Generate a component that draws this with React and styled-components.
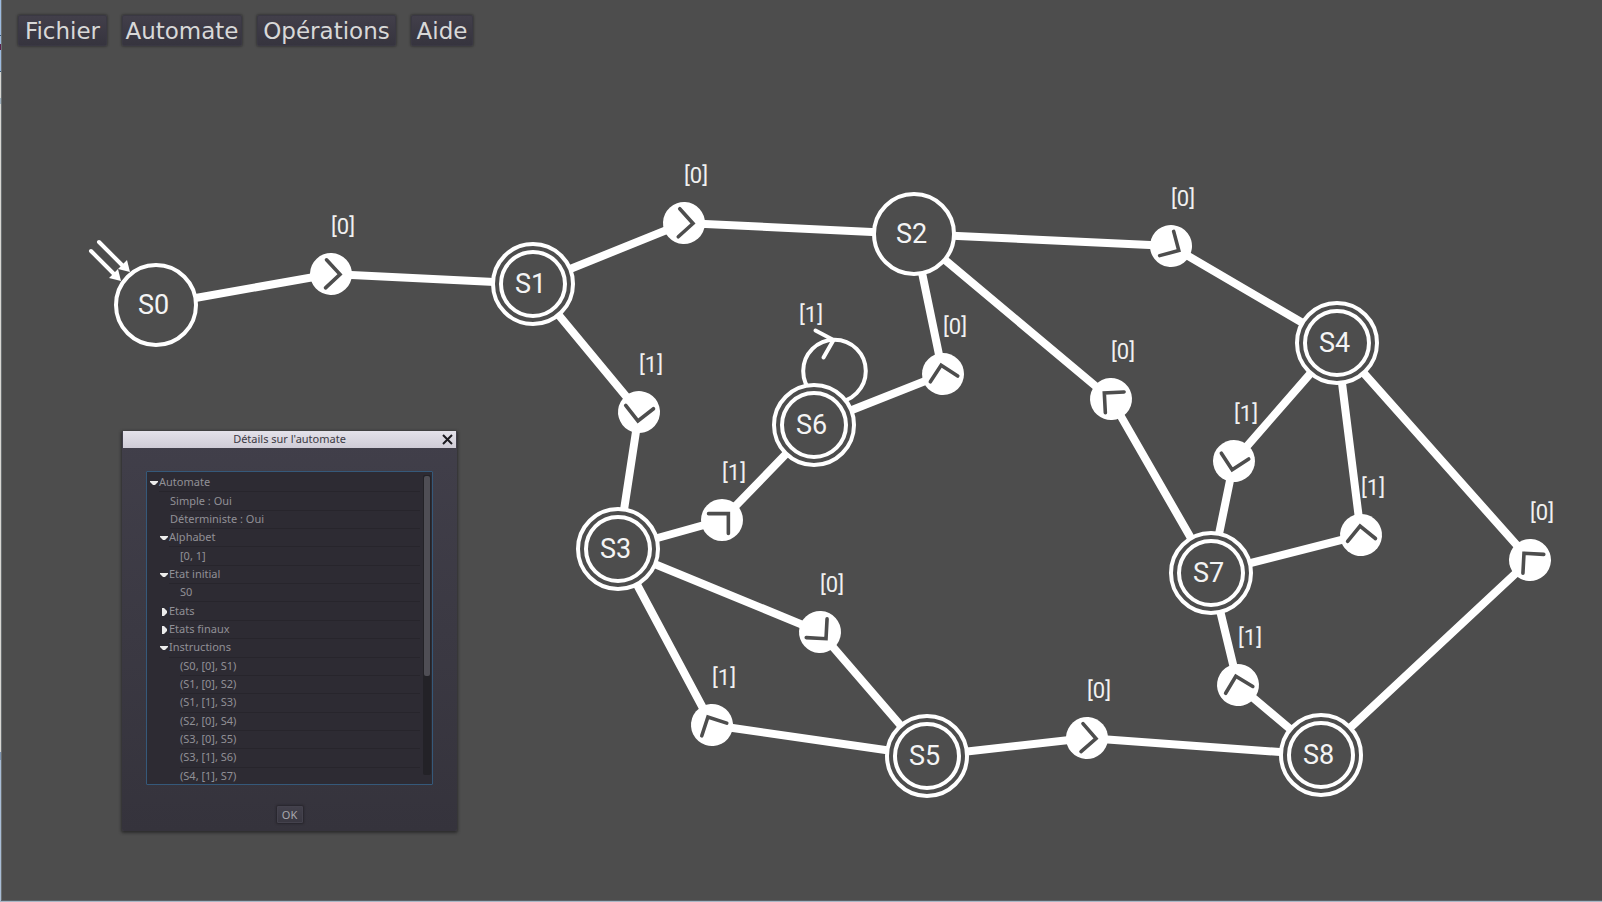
import React from "react";
import styled, { createGlobalStyle, css } from "styled-components";

const GlobalStyle = createGlobalStyle`
  * { box-sizing: border-box; }
  body { margin: 0; background: #4d4d4d; }
`;

const Desktop = styled.div`
  min-height: 100vh;
  display: flex;
  padding: 0 0 2px 1px;
  background:
    linear-gradient(#a9b7c6, #a9b7c6) bottom / 100% 1px no-repeat,
    linear-gradient(
      #9dbbe0 0 35px, #35587c 35px 36px, #9dbbe0 36px 44px, #5b2350 44px 50px,
      #9dbbe0 50px 71px, #35587c 71px 72px, #d6d6d2 72px 98px, #9fb0bd 98px 104px,
      #d6d6d2 104px 752px, #7f95b3 752px 760px, #a9bdd6 760px
    );
`;

const Workspace = styled.main`
  position: relative;
  flex: 1;
  overflow: hidden;
  background: #4d4d4d;
  border-left: 1px solid #6b7072;
  box-shadow: 0 1px 0 #5c6268;
`;

const MenuBar = styled.nav`
  position: relative;
  z-index: 2;
  display: flex;
  gap: 15px;
  padding: 15px 16px;
`;

const MenuButton = styled.button`
  width: ${(p) => p.$width}px;
  height: 31px;
  padding: 0;
  border: 1px solid #3a3843;
  border-radius: 2px;
  background: linear-gradient(#423f4a, #36343e);
  box-shadow: 0 0 2px 1px rgba(30, 30, 34, 0.45);
  color: #d8d8d8;
  font: 23px/28px "DejaVu Sans", sans-serif;
  text-align: center;
  white-space: nowrap;
`;

const Drawing = styled.svg`
  position: absolute;
  top: 0;
  left: -2px;
  width: 100%;
  height: 100%;
  overflow: visible;
  fill: none;
  stroke: #fff;
`;

const Graph = styled.section`
  position: absolute;
  inset: 0 0 0 -2px;
`;

const ring = css`
  border: 4px solid #fff;
  border-radius: 50%;
`;

const StateNode = styled.div`
  ${ring}
  position: absolute;
  width: 84px;
  height: 84px;
  margin: -42px 0 0 -42px;
  padding: 4px;
  background: #4d4d4d;
`;

const StateFace = styled.div`
  ${ring}
  border-color: ${(p) => (p.$final ? "#fff" : "transparent")};
  height: 100%;
  display: flex;
  align-items: center;
  justify-content: center;
  padding-right: 5px;
  color: #f4f4f4;
  font: 27px/32px Roboto, sans-serif;
`;

const EdgeLabel = styled.span`
  position: absolute;
  margin-top: -61px;
  color: #f0f0f0;
  font: 22px/28px Roboto, sans-serif;
`;

const Dialog = styled.section`
  position: absolute;
  z-index: 1;
  left: 120px;
  top: 431px;
  width: 335px;
  height: 400px;
  display: flex;
  flex-direction: column;
  border-radius: 2px;
  background: linear-gradient(#413f4a, #35333c);
  box-shadow: 0 1px 3px 1px rgba(30, 30, 32, 0.7);
  font: 11px/16px "Noto Sans", sans-serif;
`;

const TitleBar = styled.header`
  display: grid;
  grid-template-columns: 14px 1fr 14px;
  align-items: center;
  height: 17px;
  margin: 0 1px;
  background: linear-gradient(#e4e2ea, #cfccd6);
  color: #3c3a44;
`;

const Title = styled.h2`
  grid-column: 2;
  margin: 0;
  padding-bottom: 2px;
  font: inherit;
  text-align: center;
`;

const CloseButton = styled.button`
  display: flex;
  padding: 0 0 2px;
  border: 0;
  background: none;
`;

const DialogBody = styled.div`
  flex: 1;
  display: flex;
  flex-direction: column;
  align-items: center;
  justify-content: space-between;
  padding: 23px 24px 8px;
`;

const TreePanel = styled.div`
  align-self: stretch;
  display: flex;
  height: 314px;
  overflow: hidden;
  padding: 2px 1px 0 3px;
  border: 1px solid #35597a;
  border-radius: 1px;
  background: #2d2b33;
`;

const Tree = styled.ul`
  flex: 1;
  display: grid;
  grid-auto-rows: 1fr;
  height: 312px;
  margin: 0 3px 0 0;
  padding: 0;
  list-style: none;
`;

const TreeRow = styled.li`
  display: flex;
  align-items: center;
  margin-left: ${(p) => p.$level * 10}px;
  color: #919096;
`;

const Marker = styled.svg`
  flex: none;
  width: 8px;
  height: 8px;
  margin-right: 1px;
  fill: #ececec;
`;

const RowText = styled.span`
  flex: 1;
  height: 100%;
  display: flex;
  align-items: center;
  padding-bottom: 1px;
  border-bottom: 1px solid #27252c;
`;

const ScrollTrack = styled.div`
  width: 8px;
  height: 300px;
  margin-top: 1px;
  padding: 1px;
  border-radius: 2px;
  background: #232227;
`;

const ScrollThumb = styled.div`
  height: 200px;
  border-radius: 2px;
  background: #4f4e55;
`;

const OkButton = styled.button`
  width: 26px;
  height: 17px;
  padding: 0;
  border: 1px solid #44424d;
  border-radius: 1px;
  background: linear-gradient(#42404b, #393741);
  box-shadow: 0 0 2px 1px rgba(28, 27, 32, 0.6);
  color: #a9a8ad;
  font: 11px/14px "Noto Sans", sans-serif;
`;

const menus = [
  { label: "Fichier", width: 89 },
  { label: "Automate", width: 120 },
  { label: "Opérations", width: 139 },
  { label: "Aide", width: 62 },
];

const states = {
  S0: { x: 156, y: 305 },
  S1: { x: 533, y: 284, final: true },
  S2: { x: 914, y: 234 },
  S3: { x: 618, y: 549, final: true },
  S4: { x: 1337, y: 343, final: true },
  S5: { x: 927, y: 756, final: true },
  S6: { x: 814, y: 425, final: true },
  S7: { x: 1211, y: 573, final: true },
  S8: { x: 1321, y: 755, final: true },
};

const transitions = [
  { from: "S0", to: "S1", x: 331, y: 274, angle: 2, label: "[0]" },
  { from: "S1", to: "S2", x: 684, y: 223, angle: 3, label: "[0]" },
  { from: "S1", to: "S3", x: 639, y: 412, angle: 97, label: "[1]" },
  { from: "S6", to: "S2", x: 943, y: 374, angle: -102, label: "[0]" },
  { from: "S3", to: "S6", x: 722, y: 520, angle: -45, label: "[1]" },
  { from: "S3", to: "S5", x: 820, y: 632, angle: 48, label: "[0]" },
  { from: "S5", to: "S3", x: 712, y: 725, angle: -117, label: "[1]" },
  { from: "S2", to: "S4", x: 1171, y: 246, angle: 30, label: "[0]" },
  { from: "S7", to: "S2", x: 1111, y: 399, angle: -138, label: "[0]" },
  { from: "S4", to: "S7", x: 1234, y: 461, angle: 102, label: "[1]" },
  { from: "S7", to: "S4", x: 1361, y: 535, angle: -96, label: "[1]" },
  { from: "S8", to: "S4", x: 1530, y: 560, angle: -132, label: "[0]" },
  { from: "S8", to: "S7", x: 1238, y: 685, angle: -104, label: "[1]" },
  { from: "S5", to: "S8", x: 1087, y: 738, angle: 4, label: "[0]" },
];

const rows = [
  { text: "Automate", level: 0, marker: "open" },
  { text: "Simple : Oui", level: 2 },
  { text: "Déterministe : Oui", level: 2 },
  { text: "Alphabet", level: 1, marker: "open" },
  { text: "[0, 1]", level: 3 },
  { text: "Etat initial", level: 1, marker: "open" },
  { text: "S0", level: 3 },
  { text: "Etats", level: 1, marker: "closed" },
  { text: "Etats finaux", level: 1, marker: "closed" },
  { text: "Instructions", level: 1, marker: "open" },
  { text: "(S0, [0], S1)", level: 3 },
  { text: "(S1, [0], S2)", level: 3 },
  { text: "(S1, [1], S3)", level: 3 },
  { text: "(S2, [0], S4)", level: 3 },
  { text: "(S3, [0], S5)", level: 3 },
  { text: "(S3, [1], S6)", level: 3 },
  { text: "(S4, [1], S7)", level: 3 },
];

const markerPaths = {
  open: "M0 2h8v1L5 6H3L0 3z",
  closed: "M2 0h2l3 3v2L4 8H2z",
};

function Edges() {
  return (
    <Drawing aria-hidden="true">
      <g strokeWidth="8">
        {transitions.map((t) => {
          const a = states[t.from];
          const b = states[t.to];
          return (
            <polyline
              key={t.from + t.to}
              points={`${a.x},${a.y} ${t.x},${t.y} ${b.x},${b.y}`}
            />
          );
        })}
      </g>
      {transitions.map((t) => (
        <g key={t.from + t.to} transform={`translate(${t.x} ${t.y}) rotate(${t.angle})`}>
          <circle r="21" fill="#fff" stroke="none" />
          <path
            d="M-5 -14L9 0L-5 14"
            stroke="#4d4d4d"
            strokeWidth="3.6"
            strokeLinecap="round"
          />
        </g>
      ))}
      <g strokeWidth="4" strokeLinecap="round">
        <circle cx="834.5" cy="371" r="31.3" />
        <path d="M815.5 330.5L833.5 340L823.5 357.5" />
      </g>
    </Drawing>
  );
}

function InitialArrows() {
  return (
    <Drawing aria-hidden="true">
      <g strokeWidth="4" strokeLinecap="round">
        <path d="M99 242L123 266M91 251L115 275" />
      </g>
      <path
        d="M130 272L118 269L127 260ZM121 281L109 278L118 269Z"
        fill="#fff"
        stroke="none"
      />
    </Drawing>
  );
}

function DetailsDialog() {
  return (
    <Dialog role="dialog" aria-labelledby="details-title">
      <TitleBar>
        <Title id="details-title">Détails sur l'automate</Title>
        <CloseButton aria-label="Fermer">
          <svg width="12" height="12" viewBox="0 0 12 12" stroke="#1c1b20" strokeWidth="2">
            <path d="M1 2L10 11M10 2L1 11" />
          </svg>
        </CloseButton>
      </TitleBar>
      <DialogBody>
        <TreePanel>
          <Tree>
            {rows.map((r) => (
              <TreeRow key={r.text} $level={r.level}>
                {r.marker && (
                  <Marker viewBox="0 0 8 8">
                    <path d={markerPaths[r.marker]} />
                  </Marker>
                )}
                <RowText>{r.text}</RowText>
              </TreeRow>
            ))}
          </Tree>
          <ScrollTrack>
            <ScrollThumb />
          </ScrollTrack>
        </TreePanel>
        <OkButton>OK</OkButton>
      </DialogBody>
    </Dialog>
  );
}

export default function App() {
  return (
    <Desktop>
      <GlobalStyle />
      <Workspace>
        <MenuBar>
          {menus.map((m) => (
            <MenuButton key={m.label} $width={m.width}>
              {m.label}
            </MenuButton>
          ))}
        </MenuBar>
        <Edges />
        <Graph aria-label="Automate">
          {Object.entries(states).map(([name, s]) => (
            <StateNode key={name} style={{ left: s.x, top: s.y }}>
              <StateFace $final={s.final}>{name}</StateFace>
            </StateNode>
          ))}
          {transitions.map((t) => (
            <EdgeLabel key={t.from + t.to} style={{ left: t.x, top: t.y }}>
              {t.label}
            </EdgeLabel>
          ))}
          <EdgeLabel style={{ left: 799, top: 362 }}>[1]</EdgeLabel>
        </Graph>
        <InitialArrows />
        <DetailsDialog />
      </Workspace>
    </Desktop>
  );
}
